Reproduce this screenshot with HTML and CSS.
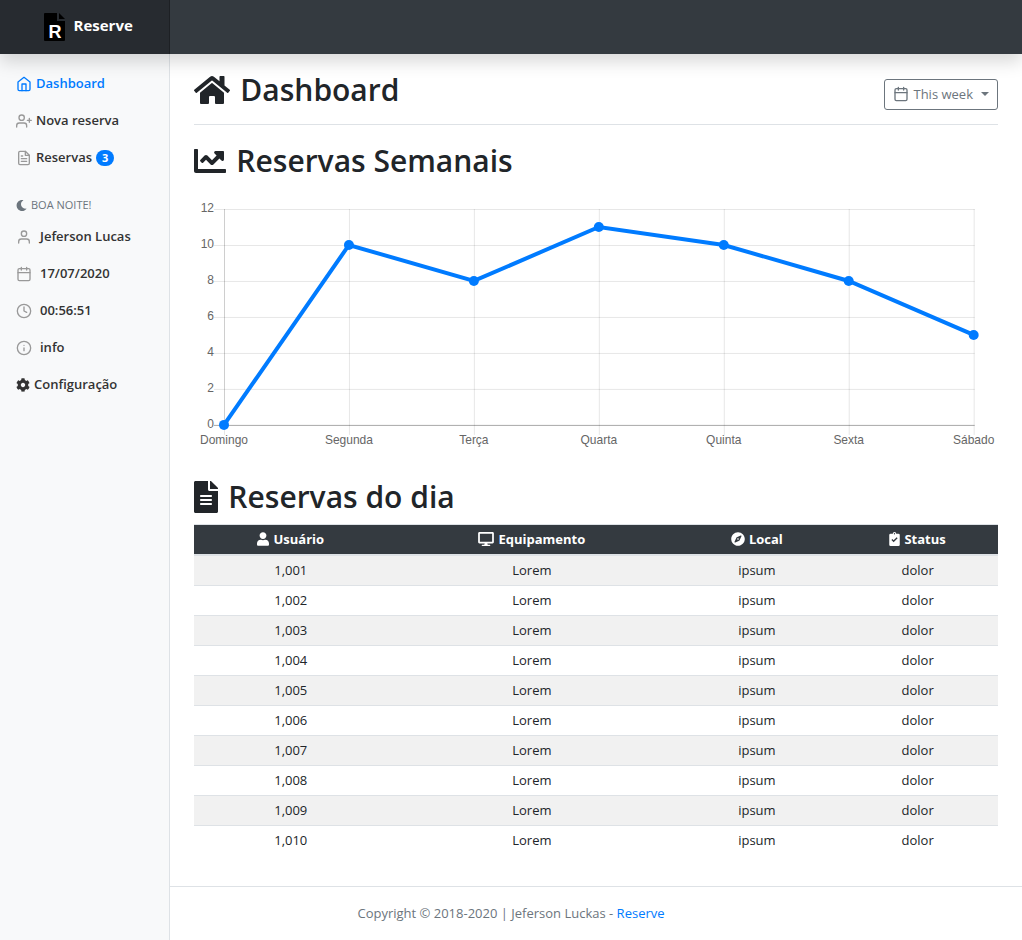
FILE: index.html
```html
<!DOCTYPE html>
<html lang="pt-BR">
<head>
<meta charset="utf-8">
<meta name="viewport" content="width=device-width, initial-scale=1">
<title>Reserve - Dashboard</title>
<link rel="stylesheet" href="styles.css">
</head>
<body>
<header class="navbar">
  <a class="brand" href="#">
    <svg class="brand-logo" viewBox="0 0 22 28" aria-hidden="true"><path d="M1 0h12v8h8v19a1 1 0 0 1-1 1H1a1 1 0 0 1-1-1V1a1 1 0 0 1 1-1z" fill="#000"/><path d="M15 0l6 6h-6z" fill="#000"/><text class="brand-letter" x="11" y="25" text-anchor="middle">R</text></svg>
    <span class="brand-name">Reserve</span>
  </a>
</header>

<div class="layout">
  <nav class="sidebar">
    <ul class="nav">
      <li><a class="nav-link active" href="#"><svg class="feather" viewBox="0 0 24 24"><path d="M3 9l9-7 9 7v11a2 2 0 0 1-2 2H5a2 2 0 0 1-2-2z"/><path d="M9 22V12h6v10"/></svg>Dashboard</a></li>
      <li><a class="nav-link" href="#"><svg class="feather" viewBox="0 0 24 24"><path d="M16 21v-2a4 4 0 0 0-4-4H5a4 4 0 0 0-4 4v2"/><circle cx="8.5" cy="7" r="4"/><path d="M20 8v6M23 11h-6"/></svg>Nova reserva</a></li>
      <li><a class="nav-link" href="#"><svg class="feather" viewBox="0 0 24 24"><path d="M14 2H6a2 2 0 0 0-2 2v16a2 2 0 0 0 2 2h12a2 2 0 0 0 2-2V8z"/><path d="M14 2v6h6M16 13H8M16 17H8M10 9H8"/></svg>Reservas<span class="badge">3</span></a></li>
    </ul>
    <h6 class="sidebar-heading"><svg class="moon" viewBox="0 0 512 512"><path d="M283.211 512c78.962 0 151.079-35.925 198.857-94.792 7.068-8.708-.639-21.43-11.562-19.35-124.203 23.654-238.262-71.576-238.262-196.954 0-72.222 38.662-138.635 101.498-174.394 9.686-5.512 7.25-20.197-3.756-22.23A258.156 258.156 0 0 0 283.211 0c-141.309 0-256 114.511-256 256 0 141.309 114.511 256 256 256z"/></svg>Boa noite!</h6>
    <ul class="nav">
      <li><a class="nav-link spaced" href="#"><svg class="feather" viewBox="0 0 24 24"><path d="M20 21v-2a4 4 0 0 0-4-4H8a4 4 0 0 0-4 4v2"/><circle cx="12" cy="7" r="4"/></svg>Jeferson Lucas</a></li>
      <li><a class="nav-link spaced" href="#"><svg class="feather" viewBox="0 0 24 24"><rect x="3" y="4" width="18" height="18" rx="2"/><path d="M16 2v4M8 2v4M3 10h18"/></svg>17/07/2020</a></li>
      <li><a class="nav-link spaced" href="#"><svg class="feather" viewBox="0 0 24 24"><circle cx="12" cy="12" r="10"/><path d="M12 6v6l4 2"/></svg>00:56:51</a></li>
      <li><a class="nav-link spaced" href="#"><svg class="feather" viewBox="0 0 24 24"><circle cx="12" cy="12" r="10"/><path d="M12 16v-4M12 8h.01"/></svg>info</a></li>
      <li><a class="nav-link" href="#"><svg class="fa" viewBox="0 0 512 512"><path d="M487.4 315.7l-42.6-24.6c4.3-23.2 4.3-47 0-70.2l42.6-24.6c4.9-2.8 7.1-8.6 5.5-14-11.1-35.6-30-67.8-54.7-94.6-3.8-4.1-10-5.1-14.8-2.3L380.8 110c-17.9-15.4-38.5-27.3-60.8-35.1V25.8c0-5.6-3.9-10.5-9.4-11.7-36.7-8.2-74.3-7.8-109.2 0-5.5 1.2-9.4 6.1-9.4 11.7V75c-22.2 7.9-42.8 19.8-60.8 35.1L88.7 85.5c-4.9-2.8-11-1.9-14.8 2.3-24.7 26.7-43.6 58.9-54.7 94.6-1.7 5.4.6 11.2 5.5 14L67.3 221c-4.3 23.2-4.3 47 0 70.2l-42.6 24.6c-4.9 2.8-7.1 8.6-5.5 14 11.1 35.6 30 67.8 54.7 94.6 3.8 4.1 10 5.1 14.8 2.3l42.6-24.6c17.9 15.4 38.5 27.3 60.8 35.1v49.2c0 5.6 3.9 10.5 9.4 11.7 36.7 8.2 74.3 7.8 109.2 0 5.5-1.2 9.4-6.1 9.4-11.7v-49.2c22.2-7.9 42.8-19.8 60.8-35.1l42.6 24.6c4.9 2.8 11 1.9 14.8-2.3 24.7-26.7 43.6-58.9 54.7-94.6 1.5-5.5-.7-11.3-5.6-14.1zM256 336c-44.1 0-80-35.9-80-80s35.9-80 80-80 80 35.9 80 80-35.9 80-80 80z"/></svg>Configuração</a></li>
    </ul>
  </nav>

  <main class="main">
    <div class="page-head">
      <h1 class="title"><svg class="icon-home" viewBox="0 0 576 512"><path d="M280.37 148.26L96 300.11V464a16 16 0 0 0 16 16l112.06-.29a16 16 0 0 0 15.92-16V368a16 16 0 0 1 16-16h64a16 16 0 0 1 16 16v95.64a16 16 0 0 0 16 16.05L464 480a16 16 0 0 0 16-16V300L295.67 148.26a12.19 12.19 0 0 0-15.3 0zM571.6 251.47L488 182.56V44.05a12 12 0 0 0-12-12h-56a12 12 0 0 0-12 12v72.61L318.47 43a48 48 0 0 0-61 0L4.34 251.47a12 12 0 0 0-1.6 16.9l25.5 31A12 12 0 0 0 45.15 301l235.22-193.74a12.19 12.19 0 0 1 15.3 0L530.9 301a12 12 0 0 0 16.9-1.6l25.5-31a12 12 0 0 0-1.7-16.93z"/></svg>Dashboard</h1>
      <button class="btn" type="button"><svg class="feather" viewBox="0 0 24 24"><rect x="3" y="4" width="18" height="18" rx="2"/><path d="M16 2v4M8 2v4M3 10h18"/></svg>This week<span class="caret"></span></button>
    </div>

    <h2 class="title"><svg class="icon-chart" viewBox="0 0 512 512"><path d="M496 384H64V80c0-8.84-7.16-16-16-16H16C7.16 64 0 71.16 0 80v336c0 17.67 14.33 32 32 32h464c8.84 0 16-7.16 16-16v-32c0-8.84-7.16-16-16-16zM464 96H345.94c-21.38 0-32.09 25.85-16.97 40.97l32.4 32.4L288 242.75l-73.37-73.37c-12.5-12.5-32.76-12.5-45.25 0l-68.69 68.69c-6.25 6.25-6.25 16.38 0 22.63l22.62 22.62c6.25 6.25 16.38 6.25 22.63 0L192 237.25l73.37 73.37c12.5 12.5 32.76 12.5 45.25 0l96-96 32.4 32.4c15.12 15.12 40.97 4.41 40.97-16.97V112c.01-8.84-7.15-16-15.99-16z"/></svg>Reservas Semanais</h2>

    <svg class="chart" viewBox="0 0 804 290" role="img" aria-label="Reservas por dia da semana">
      <path class="grid" d="M20 21.5H781M20 57.5H781M20 93.5H781M20 129.5H781M20 165.5H781M20 201.5H781M155.500 21V247M280.500 21V247M405.500 21V247M530.500 21V247M655.500 21V247M780.500 21V247"/>
      <path class="grid" d="M30.500 237V247"/>
      <path class="axis-y" d="M30.500 21V237"/>
      <path class="axis-x" d="M20 237.500H781"/>
      <polyline class="series" points="30,237 155,57 280,93 405,39 530,57 655,93 780,147"/>
      <g class="points"><circle cx="30" cy="237" r="5"/><circle cx="155" cy="57" r="5"/><circle cx="280" cy="93" r="5"/><circle cx="405" cy="39" r="5"/><circle cx="530" cy="57" r="5"/><circle cx="655" cy="93" r="5"/><circle cx="780" cy="147" r="5"/></g>
      <g class="ticks" text-anchor="end"><text x="20" y="24">12</text><text x="20" y="60">10</text><text x="20" y="96">8</text><text x="20" y="132">6</text><text x="20" y="168">4</text><text x="20" y="204">2</text><text x="20" y="240">0</text></g>
      <g class="ticks" text-anchor="middle"><text x="30" y="256">Domingo</text><text x="155" y="256">Segunda</text><text x="280" y="256">Terça</text><text x="405" y="256">Quarta</text><text x="530" y="256">Quinta</text><text x="655" y="256">Sexta</text><text x="780" y="256">Sábado</text></g>
    </svg>

    <h2 class="title"><svg class="icon-file" viewBox="0 0 384 512"><path d="M224 136V0H24C10.700 0 0 10.700 0 24v464c0 13.300 10.700 24 24 24h336c13.300 0 24-10.700 24-24V160H248c-13.200 0-24-10.800-24-24zm64 236c0 6.600-5.400 12-12 12H108c-6.600 0-12-5.400-12-12v-8c0-6.600 5.400-12 12-12h168c6.600 0 12 5.400 12 12v8zm0-64c0 6.600-5.400 12-12 12H108c-6.600 0-12-5.400-12-12v-8c0-6.600 5.400-12 12-12h168c6.600 0 12 5.400 12 12v8zm0-72v8c0 6.600-5.400 12-12 12H108c-6.600 0-12-5.400-12-12v-8c0-6.600 5.400-12 12-12h168c6.600 0 12 5.400 12 12zm96-114.100v6.100H256V0h6.100c6.400 0 12.500 2.500 17 7l97.900 98c4.500 4.500 7 10.600 7 16.900z"/></svg>Reservas do dia</h2>

    <table class="table">
      <colgroup><col class="col-user"><col class="col-equip"><col class="col-place"><col class="col-status"></colgroup>
      <thead>
        <tr>
          <th scope="col"><svg class="th-user" viewBox="0 0 448 512"><path d="M224 256c70.700 0 128-57.300 128-128S294.700 0 224 0 96 57.300 96 128s57.300 128 128 128zm89.600 32h-16.700c-22.200 10.200-46.900 16-72.900 16s-50.600-5.800-72.900-16h-16.700C60.200 288 0 348.200 0 422.400V464c0 26.500 21.500 48 48 48h352c26.500 0 48-21.500 48-48v-41.600c0-74.200-60.200-134.400-134.400-134.400z"/></svg>Usuário</th>
          <th scope="col"><svg class="th-desktop" viewBox="0 0 576 512"><path d="M528 0H48C21.500 0 0 21.500 0 48v320c0 26.500 21.500 48 48 48h192l-16 48h-72c-13.300 0-24 10.700-24 24s10.700 24 24 24h272c13.300 0 24-10.700 24-24s-10.700-24-24-24h-72l-16-48h192c26.500 0 48-21.500 48-48V48c0-26.500-21.500-48-48-48zm-16 352H64V64h448v288z"/></svg>Equipamento</th>
          <th scope="col"><svg class="th-compass" viewBox="0 0 496 512"><path d="M225.380 233.370c-12.500 12.500-12.500 32.760 0 45.250 12.490 12.500 32.760 12.500 45.250 0 12.500-12.500 12.500-32.760 0-45.250-12.500-12.490-32.760-12.490-45.250 0zM248 8C111.030 8 0 119.030 0 256s111.030 248 248 248 248-111.030 248-248S384.970 8 248 8zm126.140 148.050L308.170 300.400a31.938 31.938 0 0 1-15.770 15.770l-144.340 65.970c-16.650 7.610-33.810-9.550-26.200-26.200l65.980-144.350a31.938 31.938 0 0 1 15.770-15.770l144.340-65.970c16.650-7.600 33.800 9.550 26.190 26.200z"/></svg>Local</th>
          <th scope="col"><svg class="th-clip" viewBox="0 0 384 512"><path fill-rule="evenodd" d="M336 64h-80a64 64 0 0 0-128 0H48a48 48 0 0 0-48 48v352a48 48 0 0 0 48 48h288a48 48 0 0 0 48-48V112a48 48 0 0 0-48-48zM192 40a24 24 0 1 1 0 48 24 24 0 0 1 0-48zM80 292l34-34 46 46 112-112 34 34-146 146z"/></svg>Status</th>
        </tr>
      </thead>
      <tbody>
        <tr><td>1,001</td><td>Lorem</td><td>ipsum</td><td>dolor</td></tr>
        <tr><td>1,002</td><td>Lorem</td><td>ipsum</td><td>dolor</td></tr>
        <tr><td>1,003</td><td>Lorem</td><td>ipsum</td><td>dolor</td></tr>
        <tr><td>1,004</td><td>Lorem</td><td>ipsum</td><td>dolor</td></tr>
        <tr><td>1,005</td><td>Lorem</td><td>ipsum</td><td>dolor</td></tr>
        <tr><td>1,006</td><td>Lorem</td><td>ipsum</td><td>dolor</td></tr>
        <tr><td>1,007</td><td>Lorem</td><td>ipsum</td><td>dolor</td></tr>
        <tr><td>1,008</td><td>Lorem</td><td>ipsum</td><td>dolor</td></tr>
        <tr><td>1,009</td><td>Lorem</td><td>ipsum</td><td>dolor</td></tr>
        <tr><td>1,010</td><td>Lorem</td><td>ipsum</td><td>dolor</td></tr>
      </tbody>
    </table>
  </main>

  <footer class="footer">Copyright © 2018-2020 | Jeferson Luckas - <a href="#">Reserve</a></footer>
</div>
</body>
</html>
```

FILE: styles.css
```css
*, *::before, *::after {
  box-sizing: border-box;
}

body {
  margin: 0;
  min-height: 100vh;
  display: flex;
  flex-direction: column;
  font-family: "Open Sans", "Noto Sans", sans-serif;
  font-size: 13px;
  line-height: 21px;
  color: #212529;
  background: #fff;
}

a {
  color: #007bff;
  text-decoration: none;
}

svg {
  flex: none;
  fill: currentColor;
}

/* Top bar */
.navbar {
  position: relative;
  z-index: 2;
  display: grid;
  grid-template-columns: minmax(0, 1fr) minmax(0, 5fr);
  height: 54px;
  background: #343a40;
  box-shadow: 0 8px 16px rgba(0, 0, 0, 0.15);
}

.brand {
  display: flex;
  align-items: center;
  justify-content: center;
  gap: 8px;
  padding-left: 6px;
  color: #fff;
  font-size: 15px;
  font-weight: 700;
  background: rgba(0, 0, 0, 0.25);
  box-shadow: inset -1px 0 0 rgba(0, 0, 0, 0.25);
}

.brand-logo {
  width: 22px;
  height: 28px;
}

.brand-name {
  padding-bottom: 3px;
}

.brand-letter {
  fill: #fff;
  font: 700 18px "Liberation Sans", Arial, sans-serif;
}

/* Page grid: the footer runs underneath the sidebar */
.layout {
  flex: 1;
  display: grid;
  grid-template-columns: minmax(0, 1fr) minmax(0, 5fr);
  grid-template-rows: 1fr auto;
}

.sidebar {
  grid-column: 1;
  grid-row: 1 / 3;
  z-index: 1;
  padding-top: 11px;
  background: #f8f9fa;
  border-right: 1px solid #dee2e6;
}

.nav {
  margin: 0;
  padding: 0;
  list-style: none;
}

.nav-link {
  display: flex;
  align-items: center;
  gap: 4px;
  padding: 8px 16px;
  font-weight: 600;
  color: #333;
  white-space: nowrap;
}

.nav-link.spaced {
  gap: 8px;
}

.nav-link.active {
  color: #007bff;
}

.feather {
  width: 16px;
  height: 16px;
  fill: none;
  stroke: #999;
  stroke-width: 2;
  stroke-linecap: round;
  stroke-linejoin: round;
}

.active .feather,
.btn .feather {
  stroke: currentColor;
}

.fa {
  width: 14px;
  height: 14px;
}

.badge {
  padding: 0 6px;
  border-radius: 8px;
  color: #fff;
  background: #007bff;
  font-size: 11px;
  font-weight: 700;
  line-height: 16px;
}

.sidebar-heading {
  display: flex;
  align-items: center;
  gap: 4px;
  margin: 20px 0 4px;
  padding: 0 16px;
  color: #6c757d;
  font-size: 11px;
  font-weight: 400;
  line-height: 18px;
  text-transform: uppercase;
}

.moon {
  width: 11px;
  height: 11px;
}

/* Content */
.main {
  grid-column: 2;
  grid-row: 1;
  padding: 17px 24px 28px;
}

.page-head {
  display: flex;
  align-items: center;
  justify-content: space-between;
  margin-bottom: 17px;
  padding-bottom: 7px;
  border-bottom: 1px solid #dee2e6;
}

.title {
  display: flex;
  align-items: center;
  gap: 10px;
  margin: 0 0 8px;
  font-size: 30px;
  font-weight: 600;
  line-height: 38px;
}

.icon-home {
  width: 36px;
  height: 32px;
}

.icon-chart {
  width: 32px;
  height: 32px;
}

.icon-file {
  width: 24px;
  height: 32px;
}

.btn {
  display: flex;
  align-items: center;
  gap: 4px;
  padding: 4px 8px;
  border: 1px solid #6c757d;
  border-radius: 3px;
  color: #6c757d;
  background: transparent;
  font: inherit;
}

.caret {
  margin-left: 4px;
  border-top: 4px solid;
  border-right: 4px solid transparent;
  border-left: 4px solid transparent;
}

/* Line chart */
.chart {
  display: block;
  width: 100%;
  height: auto;
}

.grid,
.axis-x,
.axis-y {
  fill: none;
  stroke: rgba(0, 0, 0, 0.1);
}

.axis-y {
  stroke: rgba(0, 0, 0, 0.2);
}

.axis-x {
  stroke: rgba(0, 0, 0, 0.35);
}

.series {
  fill: none;
  stroke: #007bff;
  stroke-width: 4;
}

.points {
  fill: #007bff;
}

.ticks {
  fill: #666;
  font: 12px "Liberation Sans", Arial, sans-serif;
}

/* Bookings table */
.table {
  width: 100%;
  table-layout: fixed;
  border-spacing: 0;
  text-align: center;
}

.col-user {
  width: 24%;
}

.col-equip {
  width: 36%;
}

.col-place,
.col-status {
  width: 20%;
}

.table th {
  padding: 4px;
  color: #fff;
  background: #343a40;
  font-weight: 700;
  border-top: 1px solid #dee2e6;
  border-bottom: 2px solid #dee2e6;
}

.table td {
  padding: 4px;
  border-bottom: 1px solid #dee2e6;
}

.table tbody tr:last-child td {
  border-bottom: 0;
}

.table tbody tr:nth-child(odd) {
  background: #f1f1f1;
}

.table th svg {
  height: 14px;
  margin-right: 4px;
  vertical-align: -2px;
}

.th-user {
  width: 12px;
}

.th-desktop {
  width: 16px;
}

.th-compass {
  width: 14px;
}

.th-clip {
  width: 11px;
}

.footer {
  grid-column: 1 / -1;
  grid-row: 2;
  padding: 16px;
  border-top: 1px solid #dee2e6;
  color: #6c757d;
  text-align: center;
}
```
